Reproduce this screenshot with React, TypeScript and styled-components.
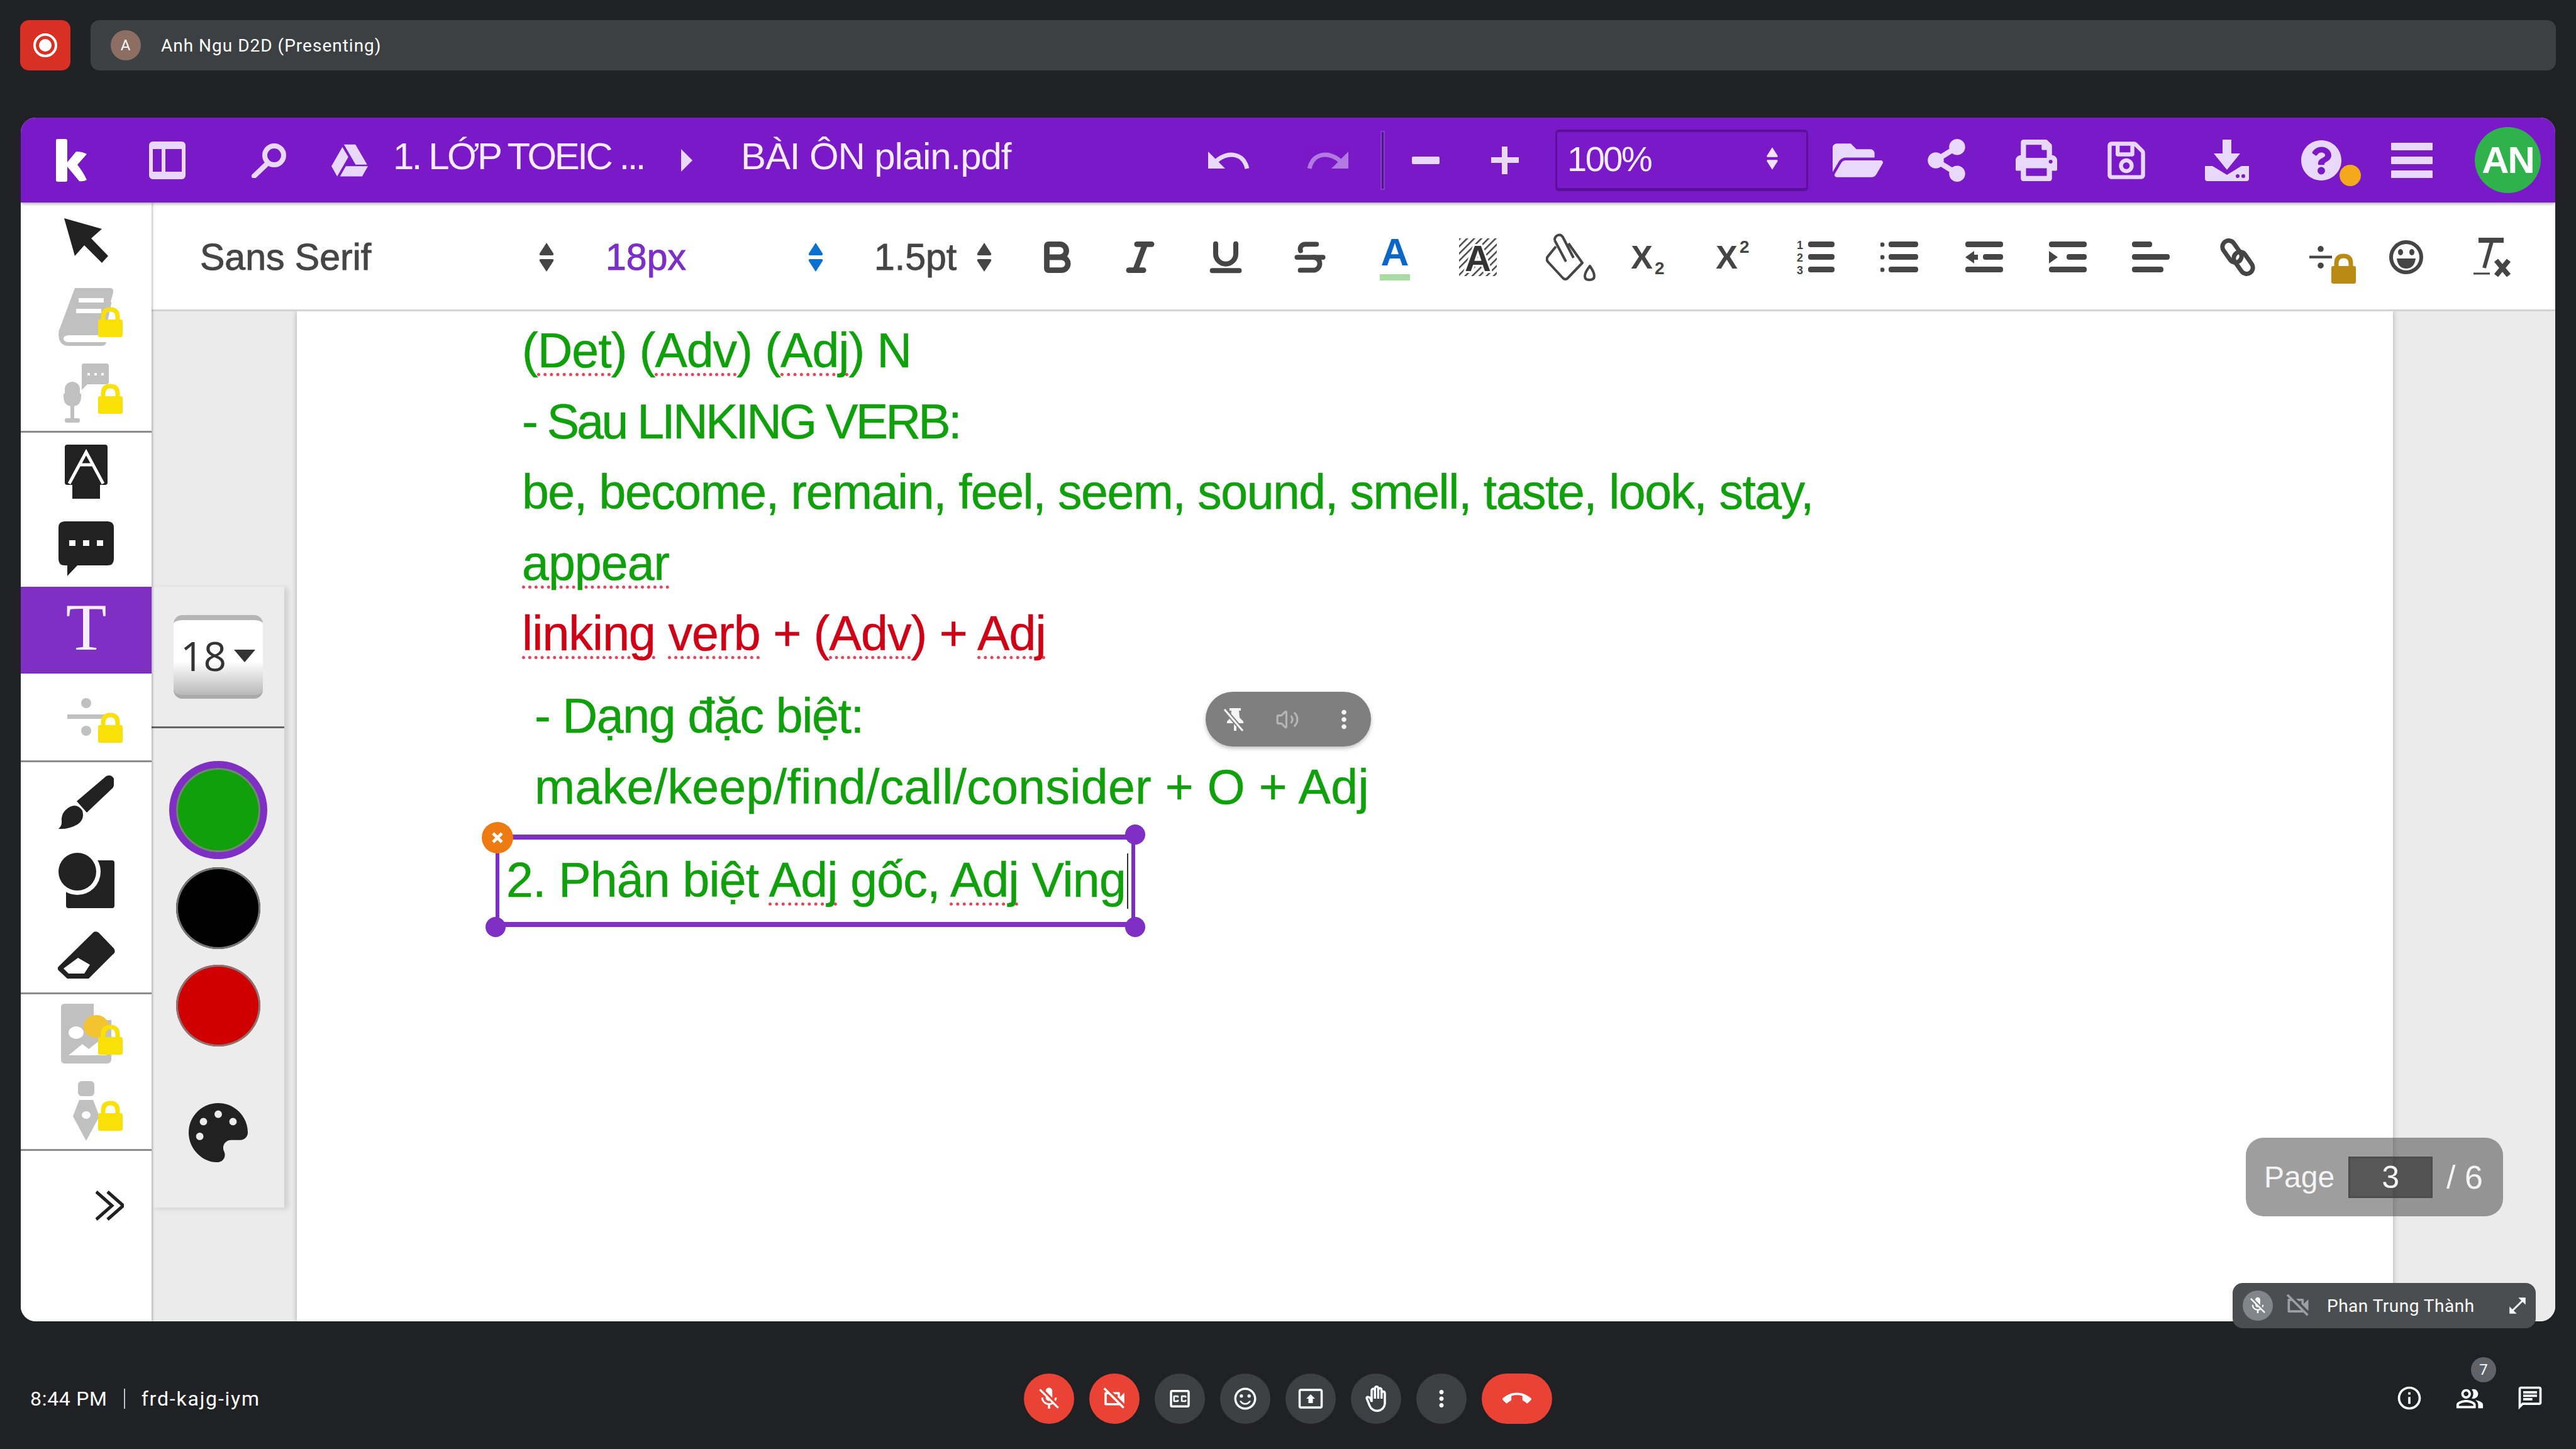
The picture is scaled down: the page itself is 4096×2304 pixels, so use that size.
import React, { FC, ReactNode } from "react";
import styled, { createGlobalStyle } from "styled-components";
import { FaFolderOpen, FaGoogleDrive, FaPalette, FaPrint, FaQuestionCircle, FaRegSave, FaShareAlt } from "react-icons/fa";
import {
  MdCallEnd,
  MdInfoOutline,
  MdMicOff,
  MdMoreVert,
  MdOpenInFull,
  MdOutlineBackHand,
  MdOutlineChat,
  MdOutlineClosedCaption,
  MdOutlinePeopleAlt,
  MdOutlinePresentToAll,
  MdOutlineSentimentSatisfied,
  MdOutlineVideocamOff,
} from "react-icons/md";
import { Bold, Italic, Strikethrough, Underline, Volume2 } from "lucide-react";

const DARK = "#212121";
const INK = "#454545";
const GREY = "#c0c0c0";
const LILAC = "#e8d9fb";
const PURPLE = "#7f2fc4";
const GREEN = "#0fa00c";

const GlobalStyle = createGlobalStyle`
  html, body {
    margin: 0;
    width: 4096px;
    height: 2304px;
    overflow: hidden;
    background: #202124;
  }
  * { box-sizing: border-box; }
`;

const Screen = styled.div`
  position: relative;
  width: 4096px;
  height: 2304px;
  background: #202124;
  font-family: "Liberation Sans", Arial, sans-serif;
`;

/* meet top strip */
const TopStrip = styled.div`
  display: flex;
  gap: 32px;
  padding: 32px 32px 0;
`;
const RecordButton = styled.div`
  width: 80px;
  height: 80px;
  border-radius: 14px;
  background: #d93025;
  display: flex;
  align-items: center;
  justify-content: center;
`;
const PresenterBar = styled.div`
  flex: 1;
  height: 80px;
  border-radius: 14px;
  background: #3c4043;
  display: flex;
  align-items: center;
  padding-left: 32px;
  gap: 32px;
  color: #fff;
  font: 400 28px Roboto, sans-serif;
  letter-spacing: 1px;
`;
const PresenterAvatar = styled.div`
  width: 48px;
  height: 48px;
  border-radius: 50%;
  background: #8d6e63;
  display: flex;
  align-items: center;
  justify-content: center;
  font-size: 24px;
`;

/* kami window */
const AppWindow = styled.div`
  margin: 75px 0 0 33px;
  width: 4030px;
  height: 1914px;
  border-radius: 24px;
  overflow: hidden;
  background: #fff;
  display: flex;
  flex-direction: column;
`;
const Header = styled.div`
  height: 135px;
  flex: none;
  background: #7a19c7;
  display: flex;
  align-items: center;
  color: #f4ecfc;
  box-shadow: 0 2px 5px rgba(0, 0, 0, 0.35);
  position: relative;
  z-index: 3;
`;
const HeadSlot = styled.div<{ $ml: number; $w?: number }>`
  flex: none;
  width: ${(p) => p.$w ?? 100}px;
  margin-left: ${(p) => p.$ml}px;
  display: flex;
  align-items: center;
  justify-content: center;
  color: ${LILAC};
`;
const HeadText = styled.div<{ $ml: number; $w: number; $track: number }>`
  flex: none;
  width: ${(p) => p.$w}px;
  margin-left: ${(p) => p.$ml}px;
  font-size: 60px;
  letter-spacing: ${(p) => p.$track}px;
  white-space: nowrap;
  transform: translateY(-6px);
`;
const HeadRule = styled.div`
  flex: none;
  width: 3px;
  height: 90px;
  margin-left: 36px;
  background: #4a1a80;
  box-shadow: 0 0 0 2px rgba(150, 90, 220, 0.5);
`;
const ZoomBox = styled.div`
  flex: none;
  width: 402px;
  height: 98px;
  margin-left: 30px;
  border: 3px solid #5c0f9c;
  border-top-width: 4px;
  border-bottom-width: 5px;
  border-radius: 6px;
  display: flex;
  align-items: center;
  justify-content: space-between;
  padding: 0 44px 4px 16px;
  font-size: 56px;
  letter-spacing: -2.5px;
  color: #f4ecfc;
`;
const UserAvatar = styled.div`
  flex: none;
  width: 105px;
  height: 105px;
  margin-left: 50px;
  border-radius: 50%;
  background: #2fb24c;
  color: #fff;
  font-size: 60px;
  font-weight: 700;
  letter-spacing: -2px;
  display: flex;
  align-items: center;
  justify-content: center;
`;
const HelpWrap = styled.div`
  position: relative;
  display: flex;
`;
const HelpDot = styled.div`
  position: absolute;
  right: -30px;
  bottom: -8px;
  width: 34px;
  height: 34px;
  border-radius: 50%;
  background: #f4a81c;
`;

const WorkArea = styled.div`
  flex: 1;
  min-height: 0;
  display: flex;
`;

/* left tools */
const Sidebar = styled.div`
  flex: none;
  width: 208px;
  background: #fff;
  position: relative;
  z-index: 2;
  box-shadow: 2px 0 3px rgba(0, 0, 0, 0.22);
`;
const SideGroup = styled.div<{ $h: number; $last?: boolean }>`
  height: ${(p) => p.$h}px;
  border-bottom: ${(p) => (p.$last ? "none" : "3px solid #8b8b8b")};
  display: flex;
  flex-direction: column;
`;
const SideItem = styled.div<{ $h: number; $active?: boolean }>`
  position: relative;
  height: ${(p) => p.$h}px;
  flex: none;
  display: flex;
  align-items: center;
  justify-content: center;
  background: ${(p) => (p.$active ? PURPLE : "transparent")};
`;
const LockBadge = styled.div<{ $top: number; $left?: number }>`
  position: absolute;
  left: ${(p) => p.$left ?? 123}px;
  top: ${(p) => p.$top}px;
  display: flex;
`;
const ActiveT = styled.div`
  font: 400 106px "Liberation Serif", serif;
  color: #f8eeff;
  line-height: 1;
  transform: translateY(-4px);
`;
const ExpandRow = styled.div`
  display: flex;
  justify-content: flex-end;
  padding: 63px 44px 0 0;
`;

const MainColumn = styled.div`
  flex: 1;
  min-width: 0;
  display: flex;
  flex-direction: column;
`;

/* text toolbar */
const Toolbar = styled.div`
  height: 173px;
  flex: none;
  background: #fff;
  display: flex;
  align-items: center;
  padding: 4px 0 0 77px;
  border-bottom: 3px solid #d4d4d4;
  color: ${INK};
  position: relative;
  z-index: 1;
`;
const SelectBox = styled.div<{ $w: number; $ml?: number; $color?: string }>`
  flex: none;
  width: ${(p) => p.$w}px;
  margin-left: ${(p) => p.$ml ?? 0}px;
  display: flex;
  align-items: center;
  justify-content: space-between;
  font-size: 59px;
  -webkit-text-stroke: 0.9px ${(p) => p.$color ?? INK};
  color: ${(p) => p.$color ?? INK};
`;
const ToolSlot = styled.div<{ $ml: number }>`
  flex: none;
  width: 120px;
  margin-left: ${(p) => p.$ml}px;
  display: flex;
  align-items: center;
  justify-content: center;
  position: relative;
`;
const MathGlyph = styled.div`
  margin-right: 20px;
  display: flex;
`;
const ColorA = styled.div`
  font-size: 62px;
  font-weight: 700;
  line-height: 58px;
  color: #0a66c8;
  border-bottom: 10px solid #a9dca3;
  padding: 0 2px 6px;
`;
const ScriptGlyph = styled.div<{ $up?: boolean }>`
  font-size: 52px;
  font-weight: 700;
  display: flex;
  align-items: ${(p) => (p.$up ? "flex-start" : "flex-end")};
  line-height: 44px;
  span {
    font-size: 28px;
    font-weight: 700;
    line-height: 28px;
    margin-left: 3px;
    transform: translateY(${(p) => (p.$up ? "-8px" : "10px")});
  }
`;

/* canvas */
const Canvas = styled.div`
  flex: 1;
  min-height: 0;
  position: relative;
  background: #ebebeb;
  padding: 0 258px 0 231px;
  display: flex;
`;
const DocPage = styled.div`
  flex: 1;
  background: #fff;
  position: relative;
  padding: 6px 0 0 358px;
  box-shadow: 0 0 8px rgba(0, 0, 0, 0.28);
  color: ${GREEN};
  font-size: 77px;
  line-height: 112.5px;
  white-space: nowrap;
  -webkit-text-stroke: 0.5px currentColor;
`;
const DocLine = styled.div<{ $red?: boolean; $indent?: boolean; $mt?: number; $track: number }>`
  height: ${(p) => (p.$indent ? 113 : 112.5)}px;
  margin-top: ${(p) => p.$mt ?? 0}px;
  margin-left: ${(p) => (p.$indent ? 20 : 0)}px;
  letter-spacing: ${(p) => p.$track}px;
  color: ${(p) => (p.$red ? "#cf0016" : GREEN)};
`;
const Spell = styled.span`
  text-decoration: underline dotted #e0485e 5px;
  text-underline-offset: 9px;
  text-decoration-skip-ink: none;
`;
const TextBox = styled.div`
  position: relative;
  margin: 19px 0 0 -42px;
  width: 1017px;
  height: 147px;
  border-style: solid;
  border-color: ${PURPLE};
  border-width: 8px 6px;
  padding: 0 0 0 11px;
  line-height: 128px;
  letter-spacing: -0.8px;
`;
const Caret = styled.span`
  display: inline-block;
  width: 2px;
  height: 88px;
  margin-left: 2px;
  background: #333;
  vertical-align: -19px;
`;
const Handle = styled.div<{ $x: "l" | "r"; $y: "t" | "b" }>`
  position: absolute;
  width: 32px;
  height: 32px;
  border-radius: 50%;
  background: ${PURPLE};
  ${(p) => (p.$x === "l" ? "left: -22px;" : "right: -22px;")}
  ${(p) => (p.$y === "t" ? "top: -24px;" : "bottom: -24px;")}
`;
const CloseHandle = styled.div`
  position: absolute;
  left: -28px;
  top: -28px;
  width: 50px;
  height: 50px;
  border-radius: 50%;
  background: #ee7b11;
  display: flex;
  align-items: center;
  justify-content: center;
`;
const MediaPill = styled.div`
  position: absolute;
  left: 1445px;
  top: 605px;
  width: 263px;
  height: 87px;
  border-radius: 44px;
  background: #7f7f7f;
  box-shadow: 0 3px 6px rgba(0, 0, 0, 0.25);
  display: flex;
  align-items: center;
  padding-left: 27px;
`;
const PillSlot = styled.div<{ $w: number }>`
  width: ${(p) => p.$w}px;
  display: flex;
  justify-content: center;
`;

/* flyout beside the tools */
const Flyout = styled.div`
  position: absolute;
  left: 0;
  top: 438px;
  width: 211px;
  height: 987px;
  background: #ececec;
  box-shadow: 6px 2px 8px rgba(0, 0, 0, 0.12);
  display: flex;
  flex-direction: column;
  align-items: center;
`;
const SizeButton = styled.div`
  margin-top: 45px;
  width: 142px;
  height: 133px;
  padding-bottom: 6px;
  border-radius: 14px;
  border-top: 8px solid #b5b5b5;
  border-bottom: 6px solid #aaa;
  background: linear-gradient(#fff 55%, #b9b9b9);
  display: flex;
  align-items: center;
  justify-content: center;
  gap: 12px;
  font: 400 64px "Open Sans", sans-serif;
  color: #333;
`;
const FlyoutRule = styled.div`
  margin-top: 44px;
  width: 100%;
  height: 3px;
  flex: none;
  background: #666;
`;
const Swatch = styled.div<{ $color: string; $picked?: boolean; $mt: number }>`
  flex: none;
  width: ${(p) => (p.$picked ? 156 : 134)}px;
  height: ${(p) => (p.$picked ? 156 : 130)}px;
  margin-top: ${(p) => p.$mt}px;
  border-radius: 50%;
  background: ${(p) => p.$color};
  box-shadow: inset 0 0 0 3px rgba(130, 130, 130, 0.9);
  border: ${(p) => (p.$picked ? `11px solid ${PURPLE}` : "none")};
`;
const PaletteWrap = styled.div`
  margin-top: 90px;
  display: flex;
  color: ${DARK};
`;

const PageCounter = styled.div`
  position: absolute;
  right: 83px;
  top: 1314px;
  width: 409px;
  height: 125px;
  border-radius: 28px;
  background: rgba(62, 62, 62, 0.5);
  color: #f4f4f4;
  font-size: 48px;
  display: flex;
  align-items: center;
  padding-left: 29px;
`;
const PageInput = styled.div`
  width: 134px;
  height: 66px;
  margin: 0 22px;
  background: rgba(30, 30, 30, 0.55);
  border: 3px solid #4c4c4c;
  display: flex;
  align-items: center;
  justify-content: center;
  font-size: 50px;
`;
const PageTotal = styled.span`
  font-size: 52px;
`;

/* participant tile over the corner */
const ParticipantTile = styled.div`
  position: absolute;
  left: 3550px;
  top: 2040px;
  width: 482px;
  height: 72px;
  border-radius: 16px;
  background: #4a4e51;
  display: flex;
  align-items: center;
  padding-left: 16px;
  color: #fff;
  font: 400 28px Roboto, sans-serif;
  letter-spacing: 0.5px;
`;
const TileMic = styled.div`
  width: 48px;
  height: 48px;
  border-radius: 50%;
  background: #80868b;
  display: flex;
  align-items: center;
  justify-content: center;
`;
const TileVideo = styled.div`
  margin: 0 24px 0 18px;
  display: flex;
  color: #9aa0a6;
`;
const TileName = styled.div`
  width: 286px;
`;

/* meet bottom bar */
const BottomBar = styled.div`
  margin-top: 83px;
  height: 80px;
  display: flex;
  align-items: center;
  color: #fff;
  font: 400 32px Roboto, sans-serif;
  letter-spacing: 0.7px;
`;
const MeetInfo = styled.div`
  flex: none;
  width: 1628px;
  padding-left: 48px;
  display: flex;
  align-items: center;
`;
const InfoRule = styled.div`
  width: 2px;
  height: 32px;
  background: #bdc1c6;
  margin: 0 26px;
`;
const MeetCode = styled.span`
  letter-spacing: 1.8px;
`;
const Controls = styled.div`
  display: flex;
  gap: 24px;
`;
const RoundButton = styled.div<{ $danger?: boolean; $wide?: boolean }>`
  width: ${(p) => (p.$wide ? 112 : 80)}px;
  height: 80px;
  border-radius: 40px;
  background: ${(p) => (p.$danger ? "#ea4335" : "#3c4043")};
  display: flex;
  align-items: center;
  justify-content: center;
  color: #fff;
`;
const SideActions = styled.div`
  margin-left: auto;
  padding-right: 25px;
  display: flex;
`;
const SideAction = styled.div`
  position: relative;
  width: 96px;
  display: flex;
  justify-content: center;
`;
const CountBadge = styled.div`
  position: absolute;
  left: 50px;
  top: -43px;
  width: 40px;
  height: 40px;
  border-radius: 50%;
  background: #5f6368;
  font-size: 24px;
  letter-spacing: 0;
  display: flex;
  align-items: center;
  justify-content: center;
`;

/* drawn icons */
const KamiLogo = () => (
  <svg width="50" height="68" viewBox="0 0 50 68" fill="#fff">
    <path d="M0 2 Q0 0 3 0 H15 Q18 0 18 3 V65 Q18 68 15 68 H3 Q0 68 0 65Z" />
    <path d="M18 37 L32 20 Q42 20 49 24 L34 41 Q43 52 49 65 Q44 68 37 67 L18 44Z" />
  </svg>
);
const PanelIcon = () => (
  <svg width="58" height="60" viewBox="0 0 58 60" fill="none" stroke={LILAC}>
    <rect x="3" y="3" width="52" height="54" rx="3" strokeWidth="6" />
    <path d="M23 4 V56" strokeWidth="6" />
    <path d="M4 8 H54 M4 52 H54" strokeWidth="8" />
  </svg>
);
const SearchIcon = () => (
  <svg width="58" height="56" viewBox="0 0 58 56" fill="none" stroke={LILAC} strokeWidth="8" strokeLinecap="round">
    <circle cx="37" cy="20" r="15" />
    <path d="M26 33 L5 53" />
  </svg>
);
const TriangleRight = () => (
  <svg width="20" height="38" viewBox="0 0 20 38" fill={LILAC}>
    <path d="M1 1 L19 19 L1 37Z" />
  </svg>
);
const HistoryArrow: FC<{ flip?: boolean; dim?: boolean }> = ({ flip, dim }) => (
  <svg width="66" height="28" viewBox="0 0 66 28" style={{ transform: flip ? "scaleX(-1)" : undefined, opacity: dim ? 0.5 : 1 }}>
    <path d="M0 0 V27 H27Z" fill={LILAC} />
    <path d="M12 16 C28 0 56 0 62 27" fill="none" stroke={LILAC} strokeWidth="7" />
  </svg>
);
const MinusIcon = () => (
  <svg width="44" height="12" viewBox="0 0 44 12">
    <rect width="44" height="12" rx="2" fill={LILAC} />
  </svg>
);
const PlusIcon = () => (
  <svg width="44" height="44" viewBox="0 0 44 44" fill={LILAC}>
    <rect y="17" width="44" height="9" />
    <rect x="17" width="9" height="44" />
  </svg>
);
const UpDown: FC<{ color: string; w?: number; h?: number }> = ({ color, w = 26, h = 46 }) => (
  <svg width={w} height={h} viewBox="0 0 26 46" fill={color}>
    <path d="M13 0 L24 17 Q25 20 22 20 H4 Q1 20 2 17Z" />
    <path d="M13 46 L24 29 Q25 26 22 26 H4 Q1 26 2 29Z" />
  </svg>
);
const DownloadIcon = () => (
  <svg width="70" height="66" viewBox="0 0 70 66" fill={LILAC}>
    <rect x="28" width="14" height="24" />
    <path d="M14 22 H56 L35 48Z" />
    <path d="M0 42 H12 L35 56 L58 42 H70 V62 Q70 66 66 66 H4 Q0 66 0 62Z" />
    <circle cx="52" cy="58" r="3" fill="#7a19c7" />
    <circle cx="61" cy="58" r="3" fill="#7a19c7" />
  </svg>
);
const BarsIcon = () => (
  <svg width="66" height="56" viewBox="0 0 66 56" fill={LILAC}>
    <rect width="66" height="12" rx="1" />
    <rect y="22" width="66" height="12" rx="1" />
    <rect y="44" width="66" height="12" rx="1" />
  </svg>
);
const HatchA = () => (
  <svg width="60" height="60" viewBox="0 0 60 60" overflow="visible">
    <defs>
      <pattern id="hatch" width="8" height="8" patternUnits="userSpaceOnUse" patternTransform="rotate(45)">
        <rect width="2.5" height="8" fill="#444" />
      </pattern>
    </defs>
    <rect width="60" height="60" fill="url(#hatch)" />
    <text x="30" y="52" textAnchor="middle" fontFamily="Liberation Sans" fontWeight="700" fontSize="58" fill="#333" stroke="#fff" strokeWidth="6" paintOrder="stroke">
      A
    </text>
  </svg>
);
const BucketIcon = () => (
  <svg width="80" height="76" viewBox="0 0 80 76" fill="none" stroke={INK} strokeWidth="4" strokeLinejoin="round">
    <path d="M16 21 L3 37 Q0 41 3 45 L27 71 Q31 75 35 71 L58 47 L36 16" />
    <path d="M14 11 Q14 5 19 3 Q24 1 27 6 L44 39 M14 11 L32 45" />
    <path d="M70 52 Q62 62 62 68 Q62 74 69 74 Q77 74 77 68 Q77 62 70 52Z" />
  </svg>
);
const BarLines: FC<{ rows: [number, number][] }> = ({ rows }) => (
  <>
    {rows.map(([x, w], i) => (
      <rect key={i} x={x} y={i * 20} width={w} height="9" rx="4" fill={INK} />
    ))}
  </>
);
const OrderedList = () => (
  <svg width="60" height="50" viewBox="0 0 60 50" overflow="visible">
    <BarLines rows={[[18, 42], [18, 42], [18, 42]]} />
    {["1", "2", "3"].map((n, i) => (
      <text key={n} x="0" y={12 + i * 20} fontFamily="Liberation Sans" fontWeight="700" fontSize="18" fill={INK}>
        {n}
      </text>
    ))}
  </svg>
);
const BulletList = () => (
  <svg width="60" height="50" viewBox="0 0 60 50" fill={INK}>
    <BarLines rows={[[13, 47], [13, 47], [13, 47]]} />
    <circle cx="3" cy="5" r="3.5" />
    <circle cx="3" cy="25" r="3.5" />
    <circle cx="3" cy="45" r="3.5" />
  </svg>
);
const IndentIcon: FC<{ out?: boolean }> = ({ out }) => (
  <svg width="60" height="50" viewBox="0 0 60 50" fill={INK}>
    <BarLines rows={[[0, 60], [28, 32], [0, 60]]} />
    <path d={out ? "M0 25 L14 15 V35Z" : "M14 25 L0 15 V35Z"} />
    <rect x={out ? 12 : 0} y="21" width="8" height="8" />
  </svg>
);
const AlignIcon = () => (
  <svg width="60" height="50" viewBox="0 0 60 50">
    <BarLines rows={[[0, 32], [0, 60], [0, 50]]} />
  </svg>
);
const ChainIcon = () => (
  <svg width="60" height="62" viewBox="0 0 60 62" fill="none" stroke={INK} strokeWidth="7">
    <rect x="2" y="12" width="38" height="20" rx="10" transform="rotate(55 21 22)" />
    <rect x="20" y="30" width="38" height="20" rx="10" transform="rotate(55 39 40)" />
  </svg>
);
const DivideIcon: FC<{ color: string; size: number }> = ({ color, size }) => (
  <svg width={size} height={size} viewBox="0 0 60 60" fill={color}>
    <ellipse cx="30" cy="8" rx="8" ry="8" />
    <rect y="26" width="60" height="7" />
    <ellipse cx="30" cy="52" rx="8" ry="8" />
  </svg>
);
const GrinIcon = () => (
  <svg width="56" height="56" viewBox="0 0 56 56">
    <circle cx="28" cy="28" r="24" fill="none" stroke={INK} strokeWidth="6" />
    <ellipse cx="19" cy="20" rx="4" ry="5" fill={INK} />
    <ellipse cx="37" cy="20" rx="4" ry="5" fill={INK} />
    <path d="M13 30 H43 Q41 46 28 46 Q15 46 13 30Z" fill={INK} />
  </svg>
);
const ClearFormat = () => (
  <svg width="62" height="62" viewBox="0 0 62 62" fill="none" stroke={INK}>
    <path d="M10 4 H50" strokeWidth="8" />
    <path d="M31 6 L19 48" strokeWidth="6" />
    <path d="M2 57 H28" strokeWidth="3" />
    <path d="M38 36 L58 60 M58 36 L38 60" strokeWidth="8" />
  </svg>
);
const Padlock: FC<{ color?: string; w?: number; h?: number }> = ({ color = "#f9e006", w = 39, h = 48 }) => (
  <svg width={w} height={h} viewBox="0 0 39 48" fill={color}>
    <path d="M8 22 V16 Q8 4 19.5 4 Q31 4 31 16 V22" fill="none" stroke={color} strokeWidth="7" />
    <rect y="20" width="39" height="28" rx="3" />
  </svg>
);
const CursorIcon = () => (
  <svg width="70" height="71" viewBox="0 0 70 71" fill={DARK}>
    <path d="M0 0 L60 17 L43 32 L70 60 L60 71 L32 43 L17 60Z" />
  </svg>
);
const BookIcon = () => (
  <svg width="88" height="92" viewBox="0 0 88 92" fill={GREY}>
    <path d="M26 0 H82 Q88 0 87 7 L69 72 H16 Q8 72 4 76 L0 70 Z" />
    <path d="M0 72 Q0 92 16 92 H68 Q75 92 76 86 H16 Q8 86 8 80 Q8 76 16 75 H68 L70 72 H10Z" />
    <rect x="32" y="16" width="40" height="7" fill="#fff" />
    <rect x="28" y="33" width="40" height="7" fill="#fff" />
    <path d="M82 22 L74 60" stroke={GREY} strokeWidth="5" />
  </svg>
);
const VoiceIcon = () => (
  <svg width="72" height="94" viewBox="0 0 72 94" fill={GREY}>
    <path d="M32 0 H68 Q72 0 72 4 V30 Q72 33 68 33 H38 L29 42 V4 Q29 0 32 0Z" />
    <rect x="38" y="15" width="4" height="4" fill="#fff" />
    <rect x="49" y="15" width="4" height="4" fill="#fff" />
    <rect x="60" y="15" width="4" height="4" fill="#fff" />
    <rect x="2" y="29" width="24" height="38" rx="12" />
    <path d="M0 48 H28 V52 Q28 68 14 68 Q0 68 0 52Z" />
    <rect x="11" y="66" width="6" height="22" />
    <rect x="2" y="87" width="24" height="7" rx="3" />
  </svg>
);
const ArrowBoxIcon = () => (
  <svg width="68" height="86" viewBox="0 0 68 86">
    <rect width="68" height="64" rx="4" fill={DARK} />
    <path d="M34 24 L56 64 V86 H12 V64Z" fill={DARK} />
    <path d="M7 62 L34 12 L61 62" fill="none" stroke="#fff" strokeWidth="5" />
    <path d="M23 32 H45" stroke="#fff" strokeWidth="5" />
  </svg>
);
const CommentIcon = () => (
  <svg width="88" height="87" viewBox="0 0 88 87" fill={DARK}>
    <path d="M10 0 H78 Q88 0 88 10 V60 Q88 70 78 70 H30 L14 87 V70 H10 Q0 70 0 60 V10 Q0 0 10 0Z" />
    <rect x="17" y="30" width="10" height="9" fill="#fff" />
    <rect x="39" y="30" width="10" height="9" fill="#fff" />
    <rect x="61" y="30" width="10" height="9" fill="#fff" />
  </svg>
);
const BrushIcon = () => (
  <svg width="88" height="86" viewBox="0 0 88 86" fill={DARK}>
    <path d="M29 41 L76 1 Q84 -2 88 5 V15 Q88 19 84 22 L45 59Z" />
    <path d="M0 85 Q6 80 5 72 Q4 58 18 50 Q30 44 38 56 Q42 70 30 78 Q16 86 0 85Z" />
  </svg>
);
const ShapesIcon = () => (
  <svg width="89" height="88" viewBox="0 0 89 88">
    <rect x="12" y="12" width="77" height="76" rx="4" fill={DARK} />
    <circle cx="30" cy="30" r="37" fill="#fff" />
    <circle cx="30" cy="30" r="30" fill={DARK} />
  </svg>
);
const EraserIcon = () => (
  <svg width="92" height="78" viewBox="0 0 92 78">
    <path d="M58 2 Q62 0 66 3 L90 28 Q94 34 88 38 L50 76 H16 L2 63 Q-1 59 3 56Z" fill={DARK} />
    <path d="M10 60 L33 43 L52 54 L43 68 H18Z" fill="#fff" />
  </svg>
);
const ImageLockIcon = () => (
  <svg width="80" height="95" viewBox="0 0 80 95">
    <path d="M6 0 H52 L80 26 V88 Q80 95 73 95 H6 Q0 95 0 88 V6 Q0 0 6 0Z" fill={GREY} />
    <path d="M52 0 L80 26 H52Z" fill="#fff" />
    <ellipse cx="24" cy="46" rx="12" ry="10" fill="#fff" />
    <path d="M12 82 L34 64 L44 72 L62 58 L72 82Z" fill="#fff" />
    <ellipse cx="56" cy="36" rx="20" ry="18" fill="#f4c430" />
  </svg>
);
const NibIcon = () => (
  <svg width="42" height="95" viewBox="0 0 42 95" fill={GREY}>
    <rect x="8" width="26" height="24" rx="6" />
    <path d="M10 30 H32 L42 56 L21 95 L0 56Z" />
    <ellipse cx="21" cy="54" rx="7" ry="6" fill="#fff" />
  </svg>
);
const DoubleChevron = () => (
  <svg width="45" height="48" viewBox="0 0 45 48" fill="none" stroke={DARK} strokeWidth="5">
    <path d="M1 2 L26 24 L1 46" />
    <path d="M19 2 L44 24 L19 46" />
  </svg>
);
const PinOffIcon = () => (
  <svg width="38" height="38" viewBox="0 0 38 38">
    <path d="M11 1 H29 V5 H26 L27 16 L33 22 V25 H22 V37 H18 V25 H7 V22 L13 16 L14 5 H11Z" fill="#f5f5f5" />
    <path d="M3 3 L32 37" stroke="#7f7f7f" strokeWidth="7" />
    <path d="M3 3 L32 37" stroke="#f5f5f5" strokeWidth="3" />
  </svg>
);

type SlotDef = { key: string; ml: number; icon: ReactNode };

const formatTools: SlotDef[] = [
  { key: "bold", ml: 42, icon: <Bold size={62} strokeWidth={3.4} /> },
  { key: "italic", ml: 13, icon: <Italic size={62} strokeWidth={3.4} /> },
  { key: "underline", ml: 16, icon: <Underline size={64} strokeWidth={3} /> },
  { key: "strike", ml: 14, icon: <Strikethrough size={62} strokeWidth={3} /> },
  { key: "color", ml: 15, icon: <ColorA>A</ColorA> },
  { key: "highlight", ml: 12, icon: <HatchA /> },
  { key: "fill", ml: 28, icon: <BucketIcon /> },
  { key: "sub", ml: 2, icon: <ScriptGlyph>X<span>2</span></ScriptGlyph> },
  { key: "sup", ml: 15, icon: <ScriptGlyph $up>X<span>2</span></ScriptGlyph> },
  { key: "ol", ml: 12, icon: <OrderedList /> },
  { key: "ul", ml: 13, icon: <BulletList /> },
  { key: "outdent", ml: 15, icon: <IndentIcon out /> },
  { key: "indent", ml: 13, icon: <IndentIcon /> },
  { key: "align", ml: 12, icon: <AlignIcon /> },
  { key: "link", ml: 18, icon: <ChainIcon /> },
  {
    key: "math",
    ml: 22,
    icon: (
      <>
        <MathGlyph><DivideIcon color={INK} size={36} /></MathGlyph>
        <LockBadge $top={12} $left={67}>
          <Padlock color="#b98b14" />
        </LockBadge>
      </>
    ),
  },
  { key: "emoji", ml: 6, icon: <GrinIcon /> },
  { key: "clear", ml: 16, icon: <ClearFormat /> },
];

const App: FC = () => {
  return (
    <Screen>
      <GlobalStyle />
      <TopStrip>
        <RecordButton>
          <svg width="40" height="40" viewBox="0 0 40 40">
            <circle cx="20" cy="20" r="17" fill="none" stroke="#fff" strokeWidth="4" />
            <circle cx="20" cy="20" r="10" fill="#fff" />
          </svg>
        </RecordButton>
        <PresenterBar>
          <PresenterAvatar>A</PresenterAvatar>
          Anh Ngu D2D (Presenting)
        </PresenterBar>
      </TopStrip>

      <AppWindow>
        <Header>
          <HeadSlot $ml={31}><KamiLogo /></HeadSlot>
          <HeadSlot $ml={52}><PanelIcon /></HeadSlot>
          <HeadSlot $ml={62}><SearchIcon /></HeadSlot>
          <HeadSlot $ml={28}><FaGoogleDrive size={58} /></HeadSlot>
          <HeadText $ml={19} $w={397} $track={-3.5}>1. LỚP TOEIC ...</HeadText>
          <HeadSlot $ml={20}><TriangleRight /></HeadSlot>
          <HeadText $ml={36} $w={429} $track={-1.1}>BÀI ÔN plain.pdf</HeadText>
          <HeadSlot $ml={297}><HistoryArrow /></HeadSlot>
          <HeadSlot $ml={57}><HistoryArrow flip dim /></HeadSlot>
          <HeadRule />
          <HeadSlot $ml={17}><MinusIcon /></HeadSlot>
          <HeadSlot $ml={26}><PlusIcon /></HeadSlot>
          <ZoomBox>
            100%
            <UpDown color="#f0e4fd" w={20} h={36} />
          </ZoomBox>
          <HeadSlot $ml={29}><FaFolderOpen size={80} /></HeadSlot>
          <HeadSlot $ml={41}><FaShareAlt size={68} /></HeadSlot>
          <HeadSlot $ml={43}><FaPrint size={66} /></HeadSlot>
          <HeadSlot $ml={43}><FaRegSave size={68} /></HeadSlot>
          <HeadSlot $ml={60}><DownloadIcon /></HeadSlot>
          <HeadSlot $ml={50}>
            <HelpWrap>
              <FaQuestionCircle size={66} />
              <HelpDot />
            </HelpWrap>
          </HeadSlot>
          <HeadSlot $ml={44}><BarsIcon /></HeadSlot>
          <UserAvatar>AN</UserAvatar>
        </Header>

        <WorkArea>
          <Sidebar>
            <SideGroup $h={366}>
              <SideItem $h={121}><CursorIcon /></SideItem>
              <SideItem $h={122}>
                <BookIcon />
                <LockBadge $top={45}><Padlock /></LockBadge>
              </SideItem>
              <SideItem $h={120}>
                <VoiceIcon />
                <LockBadge $top={45}><Padlock /></LockBadge>
              </SideItem>
            </SideGroup>
            <SideGroup $h={524}>
              <SideItem $h={124}><ArrowBoxIcon /></SideItem>
              <SideItem $h={121}><CommentIcon /></SideItem>
              <SideItem $h={138} $active><ActiveT>T</ActiveT></SideItem>
              <SideItem $h={138}>
                <DivideIcon color={GREY} size={60} />
                <LockBadge $top={62}><Padlock /></LockBadge>
              </SideItem>
            </SideGroup>
            <SideGroup $h={369}>
              <SideItem $h={128}><BrushIcon /></SideItem>
              <SideItem $h={120}><ShapesIcon /></SideItem>
              <SideItem $h={118}><EraserIcon /></SideItem>
            </SideGroup>
            <SideGroup $h={249}>
              <SideItem $h={124}>
                <ImageLockIcon />
                <LockBadge $top={48}><Padlock /></LockBadge>
              </SideItem>
              <SideItem $h={122}>
                <NibIcon />
                <LockBadge $top={45}><Padlock /></LockBadge>
              </SideItem>
            </SideGroup>
            <SideGroup $h={270} $last>
              <ExpandRow><DoubleChevron /></ExpandRow>
            </SideGroup>
          </Sidebar>

          <MainColumn>
            <Toolbar>
              <SelectBox $w={564}>
                Sans Serif
                <UpDown color={INK} />
              </SelectBox>
              <SelectBox $w={347} $ml={81} $color="#7b2fc7">
                18px
                <UpDown color="#0d6fd0" />
              </SelectBox>
              <SelectBox $w={188} $ml={80}>
                1.5pt
                <UpDown color={INK} />
              </SelectBox>
              {formatTools.map((t) => (
                <ToolSlot key={t.key} $ml={t.ml}>{t.icon}</ToolSlot>
              ))}
            </Toolbar>

            <Canvas>
              <DocPage>
                <DocLine $track={-0.96}>(<Spell>Det</Spell>) (<Spell>Adv</Spell>) (<Spell>Adj</Spell>) N</DocLine>
                <DocLine $track={-3.7}>- Sau LINKING VERB:</DocLine>
                <DocLine $track={-1.47}>be, become, remain, feel, seem, sound, smell, taste, look, stay,</DocLine>
                <DocLine $track={-0.9}><Spell>appear</Spell></DocLine>
                <DocLine $track={-0.9} $red><Spell>linking</Spell> <Spell>verb</Spell> + (<Spell>Adv</Spell>) + <Spell>Adj</Spell></DocLine>
                <DocLine $track={-1.3} $indent $mt={18}>- Dạng đặc biệt:</DocLine>
                <DocLine $track={0.34} $indent>make/keep/find/call/consider + O + Adj</DocLine>
                <TextBox>
                  2. Phân biệt <Spell>Adj</Spell> gốc, <Spell>Adj</Spell> Ving<Caret />
                  <CloseHandle>
                    <svg width="18" height="18" viewBox="0 0 18 18" stroke="#fff" strokeWidth="5">
                      <path d="M2 2 L16 16 M16 2 L2 16" />
                    </svg>
                  </CloseHandle>
                  <Handle $x="r" $y="t" />
                  <Handle $x="l" $y="b" />
                  <Handle $x="r" $y="b" />
                </TextBox>
                <MediaPill>
                  <PillSlot $w={38}><PinOffIcon /></PillSlot>
                  <PillSlot $w={130}><Volume2 size={38} color="#b5b5b5" strokeWidth={2} /></PillSlot>
                  <PillSlot $w={50}><MdMoreVert size={46} color="#f5f5f5" /></PillSlot>
                </MediaPill>
              </DocPage>

              <Flyout>
                <SizeButton>
                  18
                  <svg width="34" height="20" viewBox="0 0 34 20" fill="#333">
                    <path d="M0 0 H34 L17 20Z" />
                  </svg>
                </SizeButton>
                <FlyoutRule />
                <Swatch $color="#0fa00c" $picked $mt={52} />
                <Swatch $color="#000" $mt={13} />
                <Swatch $color="#d10000" $mt={25} />
                <PaletteWrap><FaPalette size={94} /></PaletteWrap>
              </Flyout>

              <PageCounter>
                Page
                <PageInput>3</PageInput>
                <PageTotal>/ 6</PageTotal>
              </PageCounter>
            </Canvas>
          </MainColumn>
        </WorkArea>
      </AppWindow>

      <ParticipantTile>
        <TileMic><MdMicOff size={32} color="#fff" /></TileMic>
        <TileVideo><MdOutlineVideocamOff size={44} /></TileVideo>
        <TileName>Phan Trung Thành</TileName>
        <MdOpenInFull size={34} />
      </ParticipantTile>

      <BottomBar>
        <MeetInfo>
          8:44 PM
          <InfoRule />
          <MeetCode>frd-kajg-iym</MeetCode>
        </MeetInfo>
        <Controls>
          <RoundButton $danger><MdMicOff size={42} /></RoundButton>
          <RoundButton $danger><MdOutlineVideocamOff size={42} /></RoundButton>
          <RoundButton><MdOutlineClosedCaption size={42} /></RoundButton>
          <RoundButton><MdOutlineSentimentSatisfied size={42} /></RoundButton>
          <RoundButton><MdOutlinePresentToAll size={42} /></RoundButton>
          <RoundButton><MdOutlineBackHand size={42} /></RoundButton>
          <RoundButton><MdMoreVert size={42} /></RoundButton>
          <RoundButton $danger $wide><MdCallEnd size={46} /></RoundButton>
        </Controls>
        <SideActions>
          <SideAction><MdInfoOutline size={44} /></SideAction>
          <SideAction>
            <MdOutlinePeopleAlt size={46} />
            <CountBadge>7</CountBadge>
          </SideAction>
          <SideAction><MdOutlineChat size={44} /></SideAction>
        </SideActions>
      </BottomBar>
    </Screen>
  );
};

export default App;
